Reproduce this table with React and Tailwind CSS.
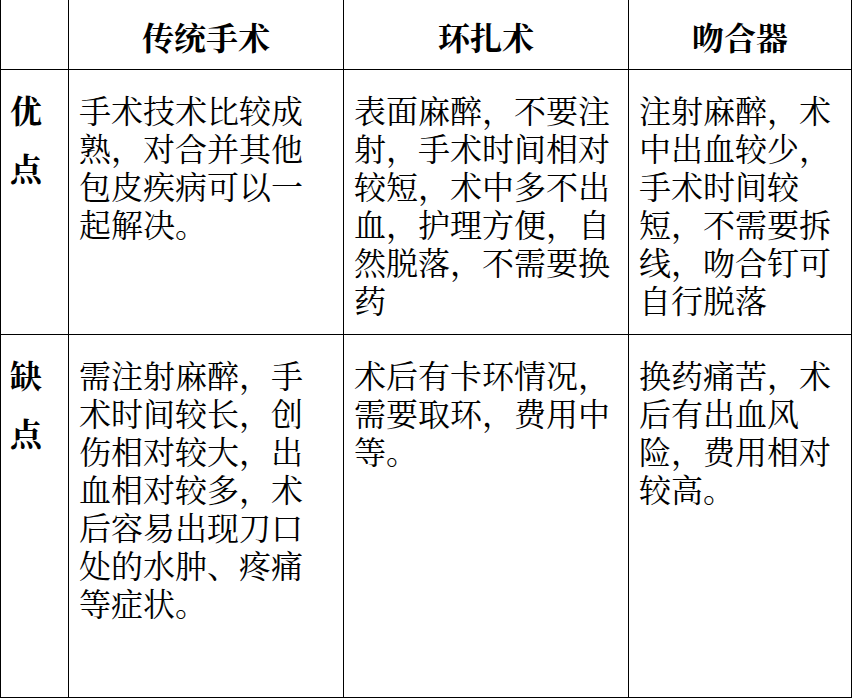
import React from "react";

const font = {
  fontFamily: '"Noto Serif CJK SC", "Noto Sans CJK SC", serif',
};

const rows = [
  {
    label: ["优", "点"],
    cells: [
      "手术技术比较成熟，对合并其他包皮疾病可以一起解决。",
      "表面麻醉，不要注射，手术时间相对较短，术中多不出血，护理方便，自然脱落，不需要换药",
      "注射麻醉，术中出血较少，手术时间较短，不需要拆线，吻合钉可自行脱落",
    ],
    h: "h-[265px]",
  },
  {
    label: ["缺", "点"],
    cells: [
      "需注射麻醉，手术时间较长，创伤相对较大，出血相对较多，术后容易出现刀口处的水肿、疼痛等症状。",
      "术后有卡环情况，需要取环，费用中等。",
      "换药痛苦，术后有出血风险，费用相对较高。",
    ],
    h: "h-[363px]",
  },
];

export default function App() {
  return (
    <div className="w-[853px] h-[700px] bg-white text-black" style={font}>
      <div className="w-[852px] border-l border-r border-black">
        <div className="grid grid-cols-[68px_275px_285px_222px] h-[70px] border-b border-black">
          <div className="border-r border-black" />
          <div className="border-r border-black flex items-center justify-center pt-[3px] text-[32px] font-bold leading-[38px]">
            传统手术
          </div>
          <div className="border-r border-black flex items-center justify-center pt-[3px] text-[32px] font-bold leading-[38px]">
            环扎术
          </div>
          <div className="flex items-center justify-center pt-[3px] text-[32px] font-bold leading-[38px]">
            吻合器
          </div>
        </div>
        {rows.map((r, i) => (
          <div
            key={i}
            className={`grid grid-cols-[68px_275px_285px_222px] ${r.h} border-b border-black`}
          >
            <div className="border-r border-black pl-[9px] pt-[10px] text-[32px] font-bold leading-[58px]">
              <div>{r.label[0]}</div>
              <div>{r.label[1]}</div>
            </div>
            {r.cells.map((c, j) => (
              <div
                key={j}
                className={`${j < 2 ? "border-r border-black" : ""} pl-[10px] pr-[12px] pt-[20px] text-[32px] leading-[38px]`}
              >
                {c}
              </div>
            ))}
          </div>
        ))}
      </div>
    </div>
  );
}
